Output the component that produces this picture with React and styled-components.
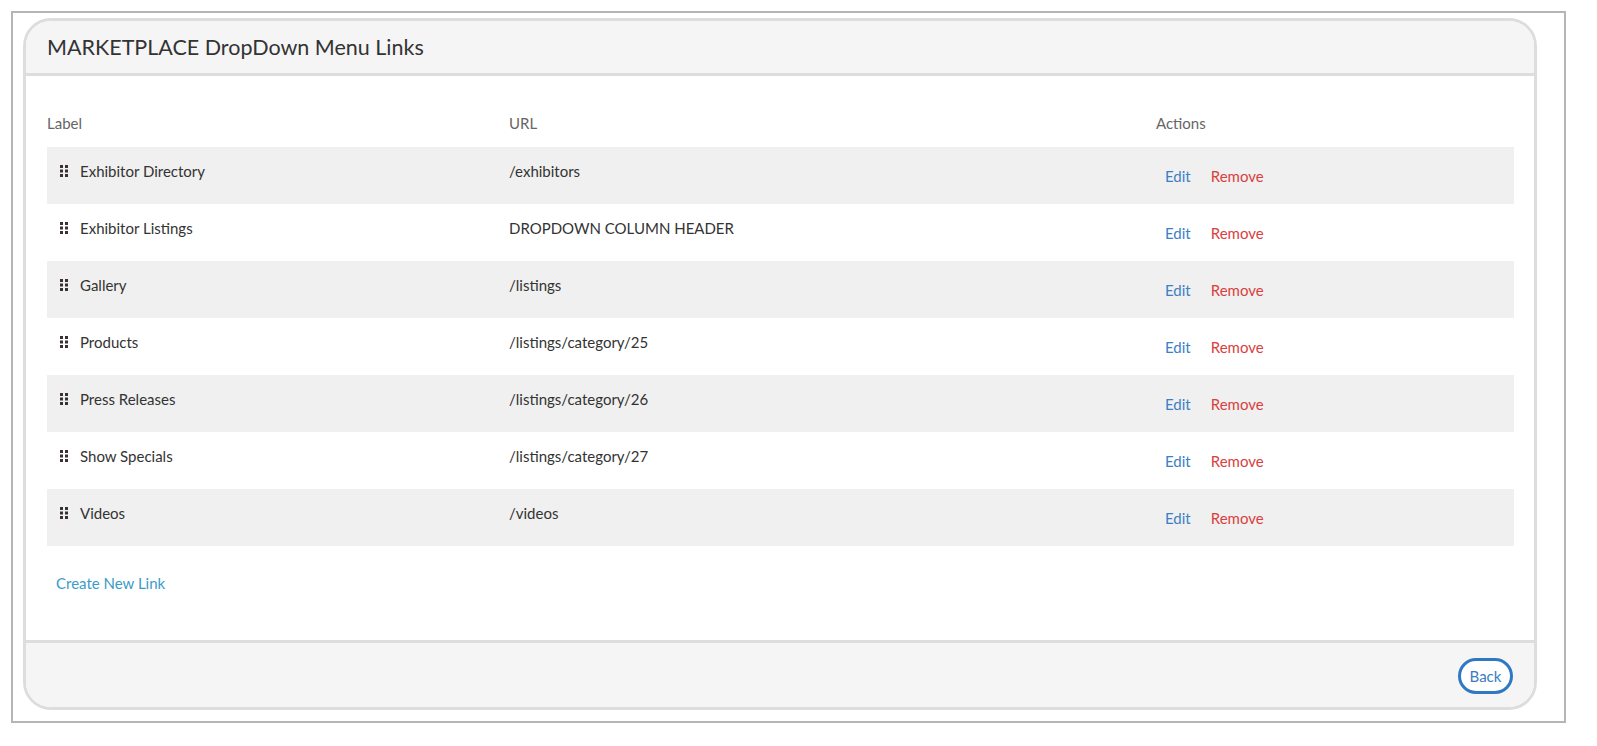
import React from 'react';
import styled, { createGlobalStyle } from 'styled-components';

const GlobalStyle = createGlobalStyle`
  body {
    margin: 0;
    background: #ffffff;
    font-family: Lato, "Open Sans", sans-serif;
    color: #333333;
  }
`;

const Page = styled.div`
  padding: 11px 31px 0 11px;
`;

const Frame = styled.div`
  border: 2px solid #b5b5b5;
  padding: 5px 27px 14px 10px;
  height: 712px;
  box-sizing: border-box;
`;

const Panel = styled.div`
  border: 3px solid #dddddd;
  border-radius: 28px;
  overflow: hidden;
  background: #ffffff;
`;

const Header = styled.div`
  background: #f5f5f5;
  border-bottom: 3px solid #dddddd;
  height: 52px;
  display: flex;
  align-items: center;
  padding-left: 21px;
`;

const Title = styled.h3`
  margin: 0;
  font-size: 21.5px;
  font-weight: 400;
  color: #333333;
`;

const Body = styled.div`
  padding: 36px 20px 47px 21px;
`;

const Grid = styled.div`
  display: grid;
  grid-template-columns: 462px 647px 1fr;
`;

const HeadCell = styled.div`
  font-size: 15px;
  line-height: 22px;
  color: #666666;
  height: 35px;
`;

const Row = styled.div`
  display: grid;
  grid-template-columns: 462px 647px 1fr;
  height: 57px;
  background: ${p => (p.$shaded ? '#f0f0f0' : '#ffffff')};
`;

const Cell = styled.div`
  font-size: 15px;
  line-height: 20px;
  color: #333333;
  padding-top: 14px;
  display: flex;
  align-items: flex-start;
`;

const LabelCell = styled(Cell)`
  padding-left: 13px;
`;

const ActionCell = styled(Cell)`
  padding-top: 19px;
  padding-left: 9px;
  gap: 20px;
`;

const Grip = styled.svg`
  width: 8px;
  height: 12px;
  margin: 4px 12px 0 0;
  flex-shrink: 0;
`;

const ActionLink = styled.a`
  color: ${p => (p.$danger ? '#d9403d' : '#3b80c6')};
  text-decoration: none;
  cursor: pointer;
`;

const CreateLink = styled.a`
  display: inline-block;
  margin: 27px 0 0 9px;
  font-size: 15px;
  line-height: 20px;
  color: #3a9cc8;
  text-decoration: none;
  cursor: pointer;
`;

const Footer = styled.div`
  background: #f5f5f5;
  border-top: 3px solid #dddddd;
  height: 64px;
  display: flex;
  align-items: center;
  justify-content: flex-end;
  padding-right: 21px;
`;

const BackButton = styled.button`
  width: 55px;
  height: 36px;
  margin-top: 1px;
  border: 3px solid #2f78c3;
  border-radius: 18px;
  background: #ffffff;
  color: #3a7cc0;
  font-family: Lato, sans-serif;
  font-size: 15px;
  padding: 0;
  cursor: pointer;
`;

const links = [
  ['Exhibitor Directory', '/exhibitors'],
  ['Exhibitor Listings', 'DROPDOWN COLUMN HEADER'],
  ['Gallery', '/listings'],
  ['Products', '/listings/category/25'],
  ['Press Releases', '/listings/category/26'],
  ['Show Specials', '/listings/category/27'],
  ['Videos', '/videos'],
];

const GripIcon = () => (
  <Grip viewBox="0 0 8 12">
    {[0, 4.5, 9].map(y => (
      <g key={y} fill="#3a3030">
        <rect x="0" y={y} width="3" height="3" />
        <rect x="5" y={y} width="3" height="3" />
      </g>
    ))}
  </Grip>
);

export default function App() {
  return (
    <Page>
      <GlobalStyle />
      <Frame>
        <Panel>
          <Header>
            <Title>MARKETPLACE DropDown Menu Links</Title>
          </Header>
          <Body>
            <Grid>
              <HeadCell>Label</HeadCell>
              <HeadCell>URL</HeadCell>
              <HeadCell>Actions</HeadCell>
            </Grid>
            {links.map(([label, url], i) => (
              <Row key={label} $shaded={i % 2 === 0}>
                <LabelCell>
                  <GripIcon />
                  {label}
                </LabelCell>
                <Cell>{url}</Cell>
                <ActionCell>
                  <ActionLink>Edit</ActionLink>
                  <ActionLink $danger>Remove</ActionLink>
                </ActionCell>
              </Row>
            ))}
            <CreateLink>Create New Link</CreateLink>
          </Body>
          <Footer>
            <BackButton>Back</BackButton>
          </Footer>
        </Panel>
      </Frame>
    </Page>
  );
}
